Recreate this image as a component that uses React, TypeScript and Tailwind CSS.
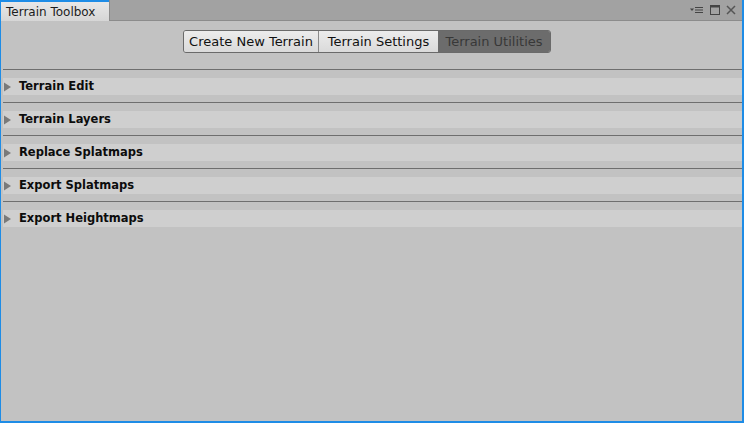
export default function App() {
  const sections = [
    "Terrain Edit",
    "Terrain Layers",
    "Replace Splatmaps",
    "Export Splatmaps",
    "Export Heightmaps",
  ];

  return (
    <div className="h-[423px] w-[744px] overflow-hidden bg-[#1e8ce6] pb-[2px] pl-px pr-[2px] font-['DejaVu_Sans',sans-serif]">
      <div className="flex h-full flex-col bg-[#c2c2c2]">
        {/* Title bar */}
        <div className="flex h-[21px] shrink-0 items-stretch border-b border-[#8c8c8c] bg-[#a2a2a2]">
          <div className="-mb-px flex w-[109px] flex-col border-r border-[#8c8c8c]">
            <div className="h-[2px] bg-[#1e8ce6]" />
            <div className="flex flex-1 items-center bg-gradient-to-b from-[#e8e8e8] to-[#d6d6d6] pl-[5px] text-[12px] text-[#1c1c1c]">
              Terrain Toolbox
            </div>
          </div>
          <div className="flex-1" />
          <div className="flex items-center gap-[6px] pr-[6px] text-[#444]">
            <svg width="14" height="10" viewBox="0 0 14 10">
              <path d="M0 3.5h4l-2 2.5z" fill="#444" />
              <path d="M5 2.5h8M5 5h8M5 7.5h8" stroke="#444" strokeWidth="1.2" />
            </svg>
            <svg width="10" height="10" viewBox="0 0 10 10">
              <rect x="0.5" y="0.5" width="9" height="9" fill="none" stroke="#444" />
              <rect x="0.5" y="0.5" width="9" height="2" fill="#444" />
            </svg>
            <svg width="10" height="10" viewBox="0 0 10 10">
              <path d="M1 1l8 8M9 1l-8 8" stroke="#555" strokeWidth="1.5" />
            </svg>
          </div>
        </div>

        {/* Toolbar */}
        <div className="flex justify-center pt-[9px] pr-[9px]">
          <div className="flex h-[23px] overflow-hidden rounded-[3px] border border-[#6a6a6a] text-[13px]">
            <div className="flex w-[135px] items-center justify-center border-r border-[#8a8a8a] bg-gradient-to-b from-[#ececec] to-[#dadada] text-[#111]">
              Create New Terrain
            </div>
            <div className="flex w-[119px] items-center justify-center bg-gradient-to-b from-[#ececec] to-[#dadada] text-[#111]">
              Terrain Settings
            </div>
            <div className="flex w-[112px] items-center justify-center bg-[#6c6c6c] text-[#383838]">
              Terrain Utilities
            </div>
          </div>
        </div>

        {/* Sections */}
        <div className="mt-[16px] flex flex-col pl-[2px]">
          {sections.map((name, i) => (
            <div key={name} className={i > 0 ? "border-t border-[#6e6e6e]" : ""}>
              {i === 0 && <div className="h-px bg-[#6e6e6e]" />}
              <div className="pt-[8px] pb-[7px]">
                <div className="flex h-[17px] items-center bg-[#cfcfcf]">
                  <svg width="8" height="10" viewBox="0 0 8 10" className="ml-[1px]">
                    <path d="M0 0.5l7 4.5-7 4.5z" fill="#7a7a7a" />
                  </svg>
                  <span className="ml-[7px] text-[11.5px] font-bold text-[#0c0c0c]">{name}</span>
                </div>
              </div>
            </div>
          ))}
        </div>
      </div>
    </div>
  );
}
